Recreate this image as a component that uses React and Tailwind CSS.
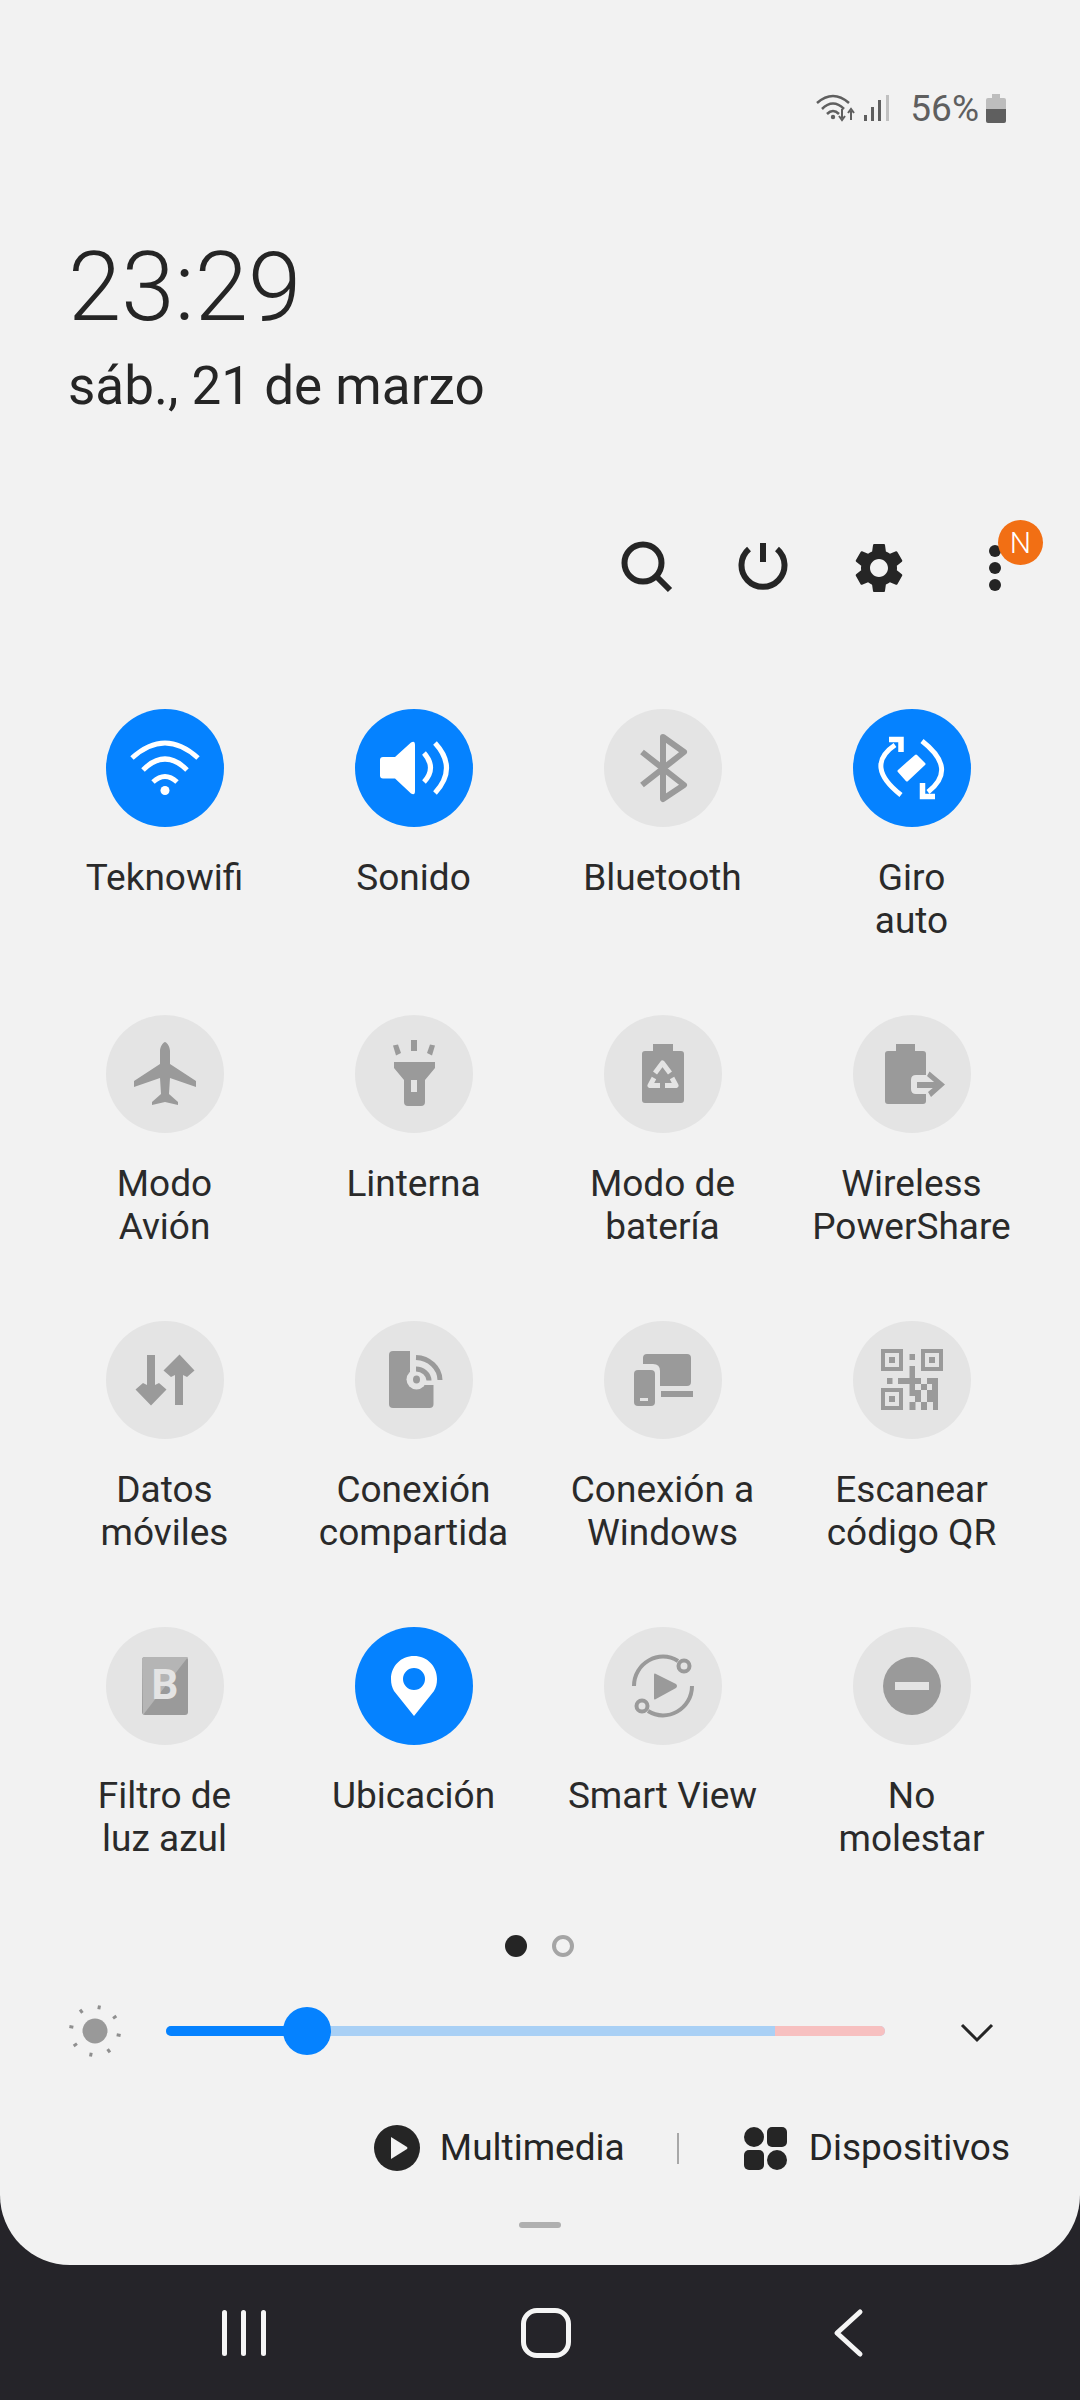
import React from 'react';

const GLYPH = '#9a9a9a';
const OFF = '#e4e4e4';

const Wifi = () => (
  <g fill="none" stroke="#fff" strokeWidth="5">
    <path d="M26 49Q59 19 92 49" />
    <path d="M37 61Q59 39 81 61" />
    <path d="M47 73Q59 62 71 73" />
    <circle cx="59" cy="81.500" r="4.500" fill="#fff" stroke="none" />
  </g>
);

const Sound = () => (
  <g>
    <path d="M25 51Q25 48 28 48H40L56 33.500Q60 31 60 36V82Q60 87 56 84.500L40 69.500H28Q25 69.500 25 66.500Z" fill="#fff" />
    <path d="M69 44Q82 59 69 73" fill="none" stroke="#fff" strokeWidth="5" />
    <path d="M80 34Q103 59 80 84" fill="none" stroke="#fff" strokeWidth="5" />
  </g>
);

const Bluetooth = () => (
  <path d="M38 43L80 76L59 90V28L80 43L38 76" fill="none" stroke={GLYPH} strokeWidth="6" strokeLinejoin="round" />
);

const Rotate = () => (
  <g fill="none" stroke="#fff" strokeWidth="5">
    <path d="M48 86Q11 57 42 36" />
    <path d="M69 32Q105 60 75 83" />
    <path d="M36 30.500H48V43" strokeWidth="5.500" />
    <path d="M82 87.500H69.500V74" strokeWidth="5.500" />
    <path d="M63 47L71 55L54 71L46 62Z" fill="#fff" strokeWidth="3" strokeLinejoin="round" />
  </g>
);

const Plane = () => (
  <path d="M59 27C56 28 54 33 54 36V49L28 66V72L54 63L55 79L46 87V90L59 87L72 90V87L63 79L64 63L90 72V66L64 49V36C64 33 62 28 59 27Z" fill={GLYPH} />
);

const Torch = () => (
  <g fill={GLYPH}>
    <rect x="56" y="25" width="6" height="11" />
    <path d="M38 30.500L43 29.500L46 38L41 40.500Z" />
    <path d="M80 30.500L75 29.500L72 38L77 40.500Z" />
    <path d="M39 47H80V53L70 65V87Q70 91 66 91H53Q49 91 49 87V65L39 53Z" />
    <rect x="56" y="65" width="6" height="12" fill={OFF} />
  </g>
);

const BatterySaver = () => (
  <g>
    <path d="M49 29H69V36H77Q80 36 80 39V85Q80 88 77 88H41Q38 88 38 85V39Q38 36 41 36H49Z" fill={GLYPH} />
    <g fill="none" stroke={OFF} strokeWidth="5" strokeLinejoin="round">
      <path d="M51 58L58.500 48L66 58" />
      <path d="M50 63L46 70.500H56" />
      <path d="M68 63L72 70.500H61" />
    </g>
    <path d="M58.500 53L53 63H57V74H60V63H64Z" fill={GLYPH} />
  </g>
);

const PowerShare = () => (
  <g>
    <path d="M43 29H62V36H70Q73 36 73 39V60H63Q58 60 58 65V74Q58 79 63 79H73V86Q73 89 70 89H35Q32 89 32 86V39Q32 36 35 36H43Z" fill={GLYPH} />
    <rect x="64" y="67" width="20" height="6" fill={GLYPH} />
    <path d="M76.500 56.500L92 69.500L78 82L75 77L84 69.500L74 61Z" fill={GLYPH} />
  </g>
);

const Data = () => (
  <g fill={GLYPH}>
    <path d="M41 34H49V64L53 62L60.500 68.500L45 84.500L29.500 68.500L37 62L41 64Z" />
    <path d="M69 84H77V54L81 56L88.500 49.500L73.500 33.500L57.500 49.500L65 56L69 54Z" />
  </g>
);

const Hotspot = () => (
  <g>
    <rect x="34" y="30" width="44.500" height="57" rx="4" fill={GLYPH} />
    <rect x="55" y="28" width="26" height="36" fill={OFF} />
    <circle cx="61.500" cy="58.500" r="10" fill={OFF} />
    <ellipse cx="61.500" cy="58.500" rx="3.500" ry="4" fill={GLYPH} />
    <path d="M61 36.500A25 23 0 0 1 85 59" fill="none" stroke={GLYPH} strokeWidth="5" />
    <path d="M61 48A13 12 0 0 1 74 59.500" fill="none" stroke={GLYPH} strokeWidth="5" />
  </g>
);

const LinkWindows = () => (
  <g fill={GLYPH}>
    <path d="M43 33H83Q87 33 87 37V61Q87 65 83 65H56V50Q56 43 49 43H39V37Q39 33 43 33Z" />
    <rect x="30" y="49" width="21" height="36" rx="4" />
    <rect x="36" y="77" width="8" height="3" fill={OFF} />
    <rect x="57" y="70" width="32" height="6" />
  </g>
);

const qrCells = [
  [56.500, 33, 5.500, 6], [56.500, 45, 5.500, 12], [34, 57, 5.500, 6], [45, 57, 12, 6], [56.500, 57, 5.500, 12],
  [62, 57, 6, 6], [74, 57, 11, 6], [68, 63, 6, 6], [79, 63, 6, 6], [56.500, 69, 6, 6], [62, 69, 6, 6],
  [74, 69, 6, 6], [80, 69, 5, 6], [62, 75, 6, 6], [74, 75, 11, 6], [56.500, 81, 6, 8], [68, 81, 6, 8], [80, 81, 5, 8],
];

const Finder = ({ x, y }) => (
  <g>
    <rect x={x} y={y} width="22" height="22" fill={GLYPH} />
    <rect x={x + 4} y={y + 4} width="14" height="14" fill={OFF} />
    <rect x={x + 8} y={y + 8} width="6" height="6" fill={GLYPH} />
  </g>
);

const Qr = () => (
  <g>
    <Finder x={28} y={28} />
    <Finder x={68} y={28} />
    <Finder x={28} y={67} />
    {qrCells.map(([x, y, w, h], i) => (
      <rect key={i} x={x} y={y} width={w} height={h} fill={GLYPH} />
    ))}
  </g>
);

const BlueFilter = () => (
  <g>
    <rect x="36" y="30" width="46" height="58" rx="3" fill={GLYPH} />
    <path d="M39 30H82L37 88L36 33Q36 30 39 30Z" fill="#b5b5b5" />
    <text x="59" y="72" textAnchor="middle" fontSize="42" fontWeight="700" fontFamily="Roboto, sans-serif" fill={OFF}>B</text>
  </g>
);

const Pin = () => (
  <path fillRule="evenodd" d="M59 29C72 29 82 39 82 52C82 57 81 60 79 64L59 89L39 64C37 60 36 57 36 52C36 39 46 29 59 29ZM59 41A11 11 0 1 0 59 63A11 11 0 1 0 59 41Z" fill="#fff" />
);

const SmartView = () => (
  <g>
    <path d="M51 46.500L72 57Q74 59 72 61L51 72.500Q50 73 50 71V48Q50 46 51 46.500Z" fill={GLYPH} />
    <g fill="none" stroke={GLYPH} strokeWidth="4">
      <path d="M30 59C30 36 55 22 74 34" />
      <circle cx="80" cy="39" r="5.500" />
      <path d="M88 59C88 82 63 96 44 84" />
      <circle cx="38" cy="79" r="5.500" />
    </g>
  </g>
);

const Dnd = () => (
  <g>
    <circle cx="59" cy="59" r="29" fill={GLYPH} />
    <rect x="42" y="55" width="34" height="8" fill={OFF} />
  </g>
);

const tiles = [
  { label: ['Teknowifi'], on: true, Icon: Wifi },
  { label: ['Sonido'], on: true, Icon: Sound },
  { label: ['Bluetooth'], Icon: Bluetooth },
  { label: ['Giro', 'auto'], on: true, Icon: Rotate },
  { label: ['Modo', 'Avión'], Icon: Plane },
  { label: ['Linterna'], Icon: Torch },
  { label: ['Modo de', 'batería'], Icon: BatterySaver },
  { label: ['Wireless', 'PowerShare'], Icon: PowerShare },
  { label: ['Datos', 'móviles'], Icon: Data },
  { label: ['Conexión', 'compartida'], Icon: Hotspot },
  { label: ['Conexión a', 'Windows'], Icon: LinkWindows },
  { label: ['Escanear', 'código QR'], Icon: Qr },
  { label: ['Filtro de', 'luz azul'], Icon: BlueFilter },
  { label: ['Ubicación'], on: true, Icon: Pin },
  { label: ['Smart View'], Icon: SmartView },
  { label: ['No', 'molestar'], Icon: Dnd },
];

function Tile({ label, on, Icon }) {
  return (
    <div className="flex flex-col items-center h-[306px]">
      <div className={`w-[118px] h-[118px] rounded-full ${on ? 'bg-[#0582ff]' : 'bg-[#e4e4e4]'}`}>
        <svg width="118" height="118" viewBox="0 0 118 118">
          <Icon />
        </svg>
      </div>
      <div className="mt-[29px] text-[37px] leading-[43px] text-center text-[#2a2a2a] whitespace-nowrap">
        {label.map((line) => (
          <div key={line}>{line}</div>
        ))}
      </div>
    </div>
  );
}

function StatusIcons() {
  return (
    <svg width="80" height="32" viewBox="0 0 80 32" className="text-[#5f5f5f]">
      <g fill="none" stroke="currentColor" strokeWidth="2.500">
        <path d="M1 11Q17 -3 33 11" />
        <path d="M6 17Q17 6 28 17" />
        <path d="M11 22Q17 16 23 22" />
      </g>
      <circle cx="17" cy="25" r="2.200" fill="currentColor" />
      <path d="M26 17V26M23 24L26 28L29 24" fill="none" stroke="currentColor" strokeWidth="2" />
      <path d="M35 28V19M32 21L35 17L38 21" fill="none" stroke="currentColor" strokeWidth="2" />
      <rect x="48" y="23" width="3" height="6" fill="currentColor" />
      <rect x="55" y="15" width="3" height="14" fill="currentColor" />
      <rect x="62" y="8" width="3" height="21" fill="currentColor" />
      <rect x="70" y="3" width="3" height="26" fill="#c0c0c0" />
    </svg>
  );
}

function Battery() {
  return (
    <svg width="20" height="30" viewBox="0 0 20 30">
      <path d="M6 0H14V4H18Q20 4 20 6V16H0V6Q0 4 2 4H6Z" fill="#bdbdbd" />
      <path d="M0 15H20V27Q20 29 18 29H2Q0 29 0 27Z" fill="#5f5f5f" />
    </svg>
  );
}

function Toolbar() {
  return (
    <div className="h-[96px] flex justify-end items-center gap-[40px] pr-[47px]">
      <svg width="76" height="60" viewBox="0 0 76 60">
        <circle cx="34" cy="25" r="18.500" fill="none" stroke="#252525" strokeWidth="6" />
        <path d="M47 38L61 52" stroke="#252525" strokeWidth="6" />
      </svg>
      <svg width="76" height="60" viewBox="0 0 76 60">
        <path d="M24 11A21.500 21.500 0 1 0 52 11" fill="none" stroke="#252525" strokeWidth="6" />
        <rect x="35" y="5" width="6" height="19" fill="#252525" />
      </svg>
      <svg width="76" height="60" viewBox="0 0 24 24" preserveAspectRatio="xMidYMid meet">
        <path fill="#252525" d="M19.14 12.94c.04-.3.06-.61.06-.94 0-.32-.02-.64-.07-.94l2.03-1.58c.18-.14.23-.41.12-.61l-1.92-3.32c-.12-.22-.37-.29-.59-.22l-2.39.96c-.5-.38-1.03-.7-1.62-.94l-.36-2.54c-.04-.24-.24-.41-.48-.41h-3.84c-.24 0-.43.17-.47.41l-.36 2.54c-.59.24-1.13.57-1.62.94l-2.39-.96c-.22-.08-.47 0-.59.22L2.74 8.87c-.12.21-.08.47.12.61l2.03 1.58c-.05.3-.09.63-.09.94s.02.64.07.94l-2.03 1.58c-.18.14-.23.41-.12.61l1.92 3.32c.12.22.37.29.59.22l2.39-.96c.5.38 1.03.7 1.62.94l.36 2.54c.05.24.24.41.48.41h3.84c.24 0 .44-.17.47-.41l.36-2.54c.59-.24 1.13-.56 1.62-.94l2.39.96c.22.08.47 0 .59-.22l1.92-3.32c.12-.22.07-.47-.12-.61l-2.01-1.58zM12 15.6c-1.98 0-3.6-1.62-3.6-3.6s1.62-3.6 3.6-3.6 3.6 1.62 3.6 3.6-1.62 3.6-3.6 3.6z" />
      </svg>
      <div className="relative w-[76px] h-[60px] flex flex-col items-center justify-center gap-[5px]">
        <span className="w-[12px] h-[12px] rounded-full bg-[#252525]" />
        <span className="w-[12px] h-[12px] rounded-full bg-[#252525]" />
        <span className="w-[12px] h-[12px] rounded-full bg-[#252525]" />
        <span className="absolute left-[41px] top-[-18px] w-[45px] h-[45px] rounded-full bg-[#f26f14] text-white text-[30px] font-light leading-[45px] text-center">
          N
        </span>
      </div>
    </div>
  );
}

function Sun() {
  const rays = [10, 55, 100, 145, 190, 235, 280, 325];
  return (
    <svg width="54" height="54" viewBox="0 0 54 54">
      <circle cx="27" cy="27" r="12.500" fill="#999" />
      {rays.map((a) => (
        <rect key={a} x="25.500" y="1" width="3" height="4" fill="#8f8f8f" transform={`rotate(${a} 27 27)`} />
      ))}
    </svg>
  );
}

export default function App() {
  return (
    <div className="w-[1080px] h-[2400px] bg-[#252429] font-['Roboto',sans-serif]">
      <div className="h-[2265px] bg-[#f2f2f2] rounded-b-[70px] flex flex-col">
        <div className="h-[140px] pt-[92px] pr-[74px] flex justify-end items-start">
          <StatusIcons />
          <span className="ml-[14px] mt-[1px] text-[37px] leading-[32px] text-[#5f5f5f]">56%</span>
          <div className="ml-[7px] mt-[2px]">
            <Battery />
          </div>
        </div>

        <div className="h-[380px] pl-[68px] pt-[92px] text-[#252525]">
          <div className="text-[96px] font-light leading-[110px]">23:29</div>
          <div className="text-[53px] leading-[62px] mt-[13px]">sáb., 21 de marzo</div>
        </div>

        <Toolbar />

        <div className="mt-[93px] ml-[40px] w-[996px] grid grid-cols-4">
          {tiles.map((t) => (
            <Tile key={t.label.join(' ')} {...t} />
          ))}
        </div>

        <div className="mt-[2px] flex justify-center items-center gap-[25px] h-[22px] pr-[2px]">
          <span className="w-[22px] h-[22px] rounded-full bg-[#252525]" />
          <span className="w-[22px] h-[22px] rounded-full border-[4px] border-[#a5a5a5]" />
        </div>

        <div className="mt-[50px] h-[48px] flex items-center pl-[68px]">
          <Sun />
          <div className="ml-[44px] w-[719px] h-[10px] rounded-full bg-[#a9d0f5] relative overflow-visible">
            <div className="w-[141px] h-[10px] rounded-l-full bg-[#0582ff]" />
            <div className="absolute right-0 top-0 w-[110px] h-[10px] rounded-r-full bg-[#f7c0c0]" />
            <div className="absolute left-[117px] top-[-19px] w-[48px] h-[48px] rounded-full bg-[#0582ff]" />
          </div>
          <svg width="36" height="22" viewBox="0 0 36 22" className="ml-[74px] mt-[4px]">
            <path d="M3 3L18 18L33 3" fill="none" stroke="#252525" strokeWidth="3" />
          </svg>
        </div>

        <div className="mt-[69px] h-[48px] flex items-center justify-end pr-[70px] text-[37px] text-[#252525]">
          <svg width="46" height="46" viewBox="0 0 46 46">
            <circle cx="23" cy="23" r="23" fill="#252525" />
            <path d="M17 12L33 22Q34 23 33 24L17 34Z" fill="#f2f2f2" />
          </svg>
          <span className="ml-[20px]">Multimedia</span>
          <span className="ml-[52px] w-[2px] h-[31px] bg-[#a8a8a8]" />
          <svg width="43" height="43" viewBox="0 0 43 43" className="ml-[65px]">
            <circle cx="10" cy="10" r="10" fill="#252525" />
            <rect x="23" y="0" width="20" height="20" rx="5" fill="#252525" />
            <rect x="0" y="23" width="20" height="20" rx="5" fill="#252525" />
            <circle cx="33" cy="33" r="10" fill="#252525" />
          </svg>
          <span className="ml-[22px]">Dispositivos</span>
        </div>

        <div className="mt-[50px] mx-auto w-[42px] h-[6px] rounded-full bg-[#b0b0b0]" />
      </div>

      <div className="h-[135px] flex items-start justify-center pt-[43px] pl-[5px]">
        <div className="flex w-[44px] h-[48px] justify-between">
          <span className="w-[5px] h-[46px] mt-[2px] rounded-full bg-[#f5f5f5]" />
          <span className="w-[5px] h-[46px] mt-[2px] rounded-full bg-[#f5f5f5]" />
          <span className="w-[5px] h-[46px] mt-[2px] rounded-full bg-[#f5f5f5]" />
        </div>
        <div className="ml-[255px] w-[50px] h-[50px] rounded-[16px] border-[5px] border-[#f5f5f5]" />
        <svg width="32" height="50" viewBox="0 0 32 50" className="ml-[261px]">
          <path d="M28 4L5 25L28 46" fill="none" stroke="#f5f5f5" strokeWidth="5" strokeLinecap="round" strokeLinejoin="round" />
        </svg>
      </div>
    </div>
  );
}
